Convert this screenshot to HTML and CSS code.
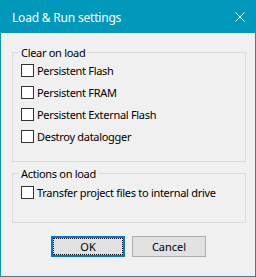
FILE: index.html
```html
<!DOCTYPE html>
<html>
<head>
    <title>Load &amp; Run settings</title>
    <link rel="stylesheet" href="styles.css">
</head>
<body>
    <div class="window">
        <div class="titlebar">
            <span class="title">Load &amp; Run settings</span>
            <svg class="close" width="10" height="10" viewBox="0 0 10 10">
                <path d="M0.5 0.5 L9.5 9.5 M9.5 0.5 L0.5 9.5" stroke="#fff" stroke-width="1" fill="none"/>
            </svg>
        </div>

        <div class="content">
            <fieldset class="group group-clear">
                <legend>Clear on load</legend>
                <label class="check"><input type="checkbox"> Persistent Flash</label>
                <label class="check"><input type="checkbox"> Persistent FRAM</label>
                <label class="check"><input type="checkbox"> Persistent External Flash</label>
                <label class="check"><input type="checkbox"> Destroy datalogger</label>
            </fieldset>

            <fieldset class="group group-actions">
                <legend>Actions on load</legend>
                <label class="check"><input type="checkbox"> Transfer project files to internal drive</label>
            </fieldset>

            <div class="buttons">
                <button class="button default">OK</button>
                <button class="button">Cancel</button>
            </div>
        </div>
    </div>
</body>
</html>
```

FILE: styles.css
```css
html, body {
    margin: 0;
    padding: 0;
}
body {
    font-family: "Noto Sans", "Open Sans", sans-serif;
    font-size: 11px;
    color: #000;
    background-color: #f0f0f0;
}
.window {
    width: 256px;
    height: 277px;
    box-sizing: border-box;
    border: 1px solid #0099bc;
    background-color: #f0f0f0;
    display: flex;
    flex-direction: column;
}
.titlebar {
    height: 32px;
    flex: none;
    background-color: #0099bc;
    color: #fff;
    display: flex;
    align-items: center;
    justify-content: space-between;
    padding: 0 10px 0 11px;
}
.title {
    font-size: 12px;
    letter-spacing: -0.2px;
}
.close {
    display: block;
}
.content {
    padding: 0 9px 0 11px;
}
.group {
    margin: 0;
    border: 1px solid #dcdcdc;
    padding: 0 8px;
    min-width: 0;
}
.group legend {
    margin-left: -2px;
    padding: 0 2px;
    line-height: 13px;
    letter-spacing: -0.3px;
}
.group-clear {
    margin-top: 13px;
    padding-top: 0;
    padding-bottom: 14px;
}
.group-actions {
    margin-top: 5px;
    padding-top: 1px;
    padding-bottom: 19px;
}
.check {
    height: 22px;
    display: flex;
    align-items: center;
    letter-spacing: -0.3px;
    white-space: nowrap;
}
.check input {
    appearance: none;
    -webkit-appearance: none;
    width: 13px;
    height: 13px;
    margin: 0 3px 0 0;
    border: 1px solid #333;
    border-radius: 0;
    background-color: #fff;
    flex: none;
}
.buttons {
    margin-top: 13px;
    display: flex;
    justify-content: center;
    gap: 7px;
    padding-right: 1px;
}
.button {
    width: 74px;
    height: 21px;
    box-sizing: border-box;
    background-color: #e1e1e1;
    border: 1px solid #adadad;
    border-radius: 0;
    font-family: inherit;
    font-size: 11px;
    color: #000;
    padding: 0;
}
.button.default {
    border: 2px solid #0078d7;
    outline: 1px dotted #000;
    outline-offset: -3px;
}
```
